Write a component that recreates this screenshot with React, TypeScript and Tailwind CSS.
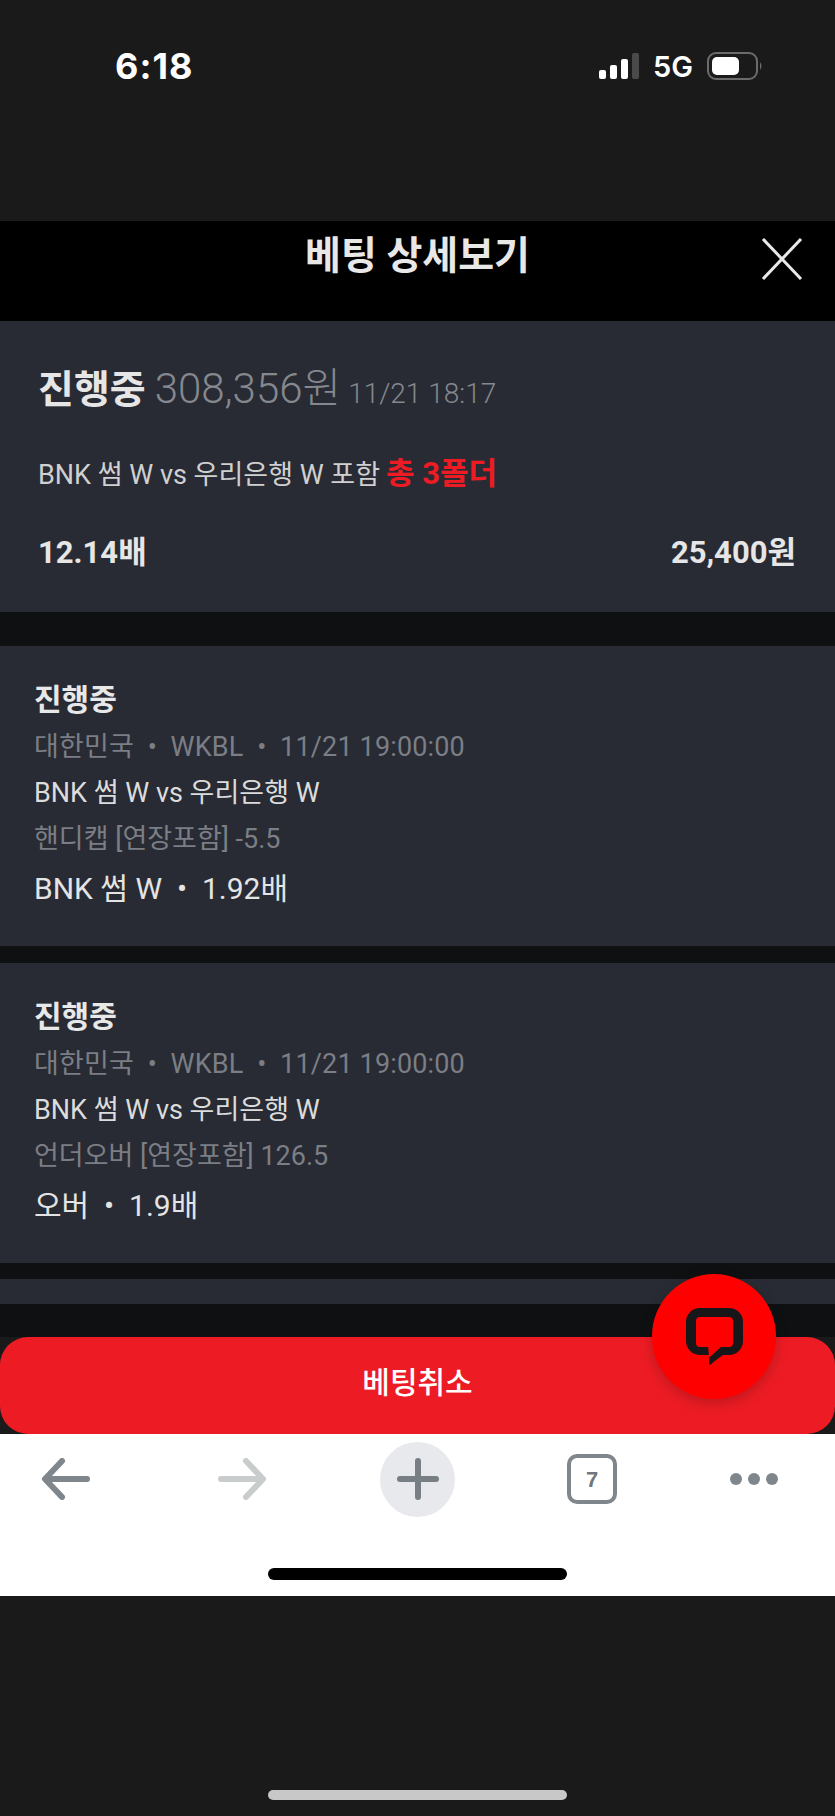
const kr = "font-['Roboto','Noto_Sans_CJK_KR',sans-serif]";

const legs = [
  { market: '핸디캡 [연장포함] -5.5', pick: 'BNK 썸 W  •  1.92배' },
  { market: '언더오버 [연장포함] 126.5', pick: '오버  •  1.9배' },
];

function StatusBar() {
  return (
    <div className="h-[221px] shrink-0 bg-[#1a1a1a] pl-[115px] pr-[72px] pt-[46px]">
      <div className="flex h-[40px] items-center justify-between">
        <span className="font-['Inter',sans-serif] text-[36px] font-bold tracking-[1px] text-white">6:18</span>
        <div className="flex items-center">
          <svg width="40" height="26" viewBox="0 0 40 26" className="mr-[14px]">
            <rect x="0" y="17" width="7" height="9" rx="2" fill="#fff" />
            <rect x="11" y="12" width="7" height="14" rx="2" fill="#fff" />
            <rect x="22" y="6" width="7" height="20" rx="2" fill="#fff" />
            <rect x="33" y="0" width="7" height="26" rx="2" fill="#4a4a4a" />
          </svg>
          <span className="mr-[14px] font-['Inter',sans-serif] text-[29px] font-semibold leading-none text-white">5G</span>
          <svg width="56" height="28" viewBox="0 0 56 28">
            <rect x="1" y="1" width="49" height="26" rx="8" fill="none" stroke="#6b6b6b" strokeWidth="2" />
            <rect x="5" y="5" width="27" height="18" rx="5" fill="#fff" />
            <path d="M53 10 Q56 14 53 18 Z" fill="#6b6b6b" />
          </svg>
        </div>
      </div>
    </div>
  );
}

function LegCard({ market, pick }: { market: string; pick: string }) {
  return (
    <div className="flex h-[300px] shrink-0 flex-col bg-[#282b33] pl-[34px] pt-[36px]">
      <p className="h-[36px] text-[30px] leading-[36px] font-bold text-[#e8e8e8]">진행중</p>
      <p className="mt-[11px] h-[36px] text-[27px] leading-[36px] tracking-[0.15px] whitespace-pre text-[#7b7e85]">대한민국  •  WKBL  •  11/21 19:00:00</p>
      <p className="mt-[10px] h-[36px] text-[27px] leading-[36px] text-[#dcdcdc]">BNK 썸 W vs 우리은행 W</p>
      <p className="mt-[10px] h-[36px] text-[27px] leading-[36px] text-[#7b7e85]">{market}</p>
      <p className="mt-[12px] h-[40px] text-[30px] leading-[40px] whitespace-pre text-[#e4e4e4]">{pick}</p>
    </div>
  );
}

function Toolbar() {
  return (
    <div className="relative h-[162px] shrink-0 bg-white">
      <div className="flex h-[90px] items-center pl-[41px]">
        <svg width="50" height="42" viewBox="0 0 50 42" fill="none" stroke="#80878c" strokeWidth="6" strokeLinecap="round" strokeLinejoin="round">
          <path d="M46 21H5M21 3 4 21l17 18" />
        </svg>
        <svg width="50" height="42" viewBox="0 0 50 42" className="ml-[126px]" fill="none" stroke="#c9cccd" strokeWidth="6" strokeLinecap="round" strokeLinejoin="round">
          <path d="M4 21h41M29 3l17 18-17 18" />
        </svg>
        <div className="ml-[113px] flex h-[75px] w-[75px] items-center justify-center rounded-full bg-[#e8e9ec]">
          <svg width="42" height="42" viewBox="0 0 42 42" fill="none" stroke="#777e84" strokeWidth="6" strokeLinecap="round">
            <path d="M21 3v36M3 21h36" />
          </svg>
        </div>
        <div className="ml-[112px] flex h-[50px] w-[50px] items-center justify-center rounded-[10px] border-[4px] border-[#80878c] font-['Liberation_Sans',sans-serif] text-[22px] font-bold text-[#70767b]">7</div>
        <svg width="48" height="14" viewBox="0 0 48 14" className="ml-[113px]" fill="#80878c">
          <circle cx="6" cy="7" r="6" />
          <circle cx="24" cy="7" r="6" />
          <circle cx="42" cy="7" r="6" />
        </svg>
      </div>
      <div className="absolute bottom-[16px] left-[268px] h-[12px] w-[299px] rounded-full bg-black" />
    </div>
  );
}

export default function App() {
  return (
    <div className={`relative flex h-[1816px] w-[835px] flex-col overflow-hidden bg-[#1a1a1a] ${kr}`}>
      <StatusBar />

      <div className="relative flex h-[100px] shrink-0 justify-center bg-black pt-[10px]">
        <h1 className="text-[39px] leading-[50px] font-bold text-[#e8e8e8]">베팅 상세보기</h1>
        <svg width="42" height="42" viewBox="0 0 42 42" className="absolute top-[17px] right-[32px]" fill="none" stroke="#e8e8e8" strokeWidth="3">
          <path d="M2 1l38 40M40 1 2 41" />
        </svg>
      </div>

      <div className="flex h-[291px] shrink-0 flex-col bg-[#282b33] pl-[38px] pr-[39px] pt-[36px]">
        <div className="flex h-[48px] items-baseline">
          <span className="text-[39px] font-bold text-[#e6e6e6]">진행중</span>
          <span className="ml-[9px] text-[42px] font-light text-[#85888f]">308,356원</span>
          <span className="ml-[7px] text-[28px] font-light text-[#85888f]">11/21 18:17</span>
        </div>
        <div className="mt-[46px] flex h-[40px] items-baseline">
          <span className="text-[27px] text-[#d0d0d0]">BNK 썸 W vs 우리은행 W 포함</span>
          <span className="ml-[6px] text-[31px] font-bold text-[#ed1c24]">총 3폴더</span>
        </div>
        <div className="mt-[39px] flex items-center justify-between text-[31px] font-bold text-[#e6e6e6]">
          <span>12.14배</span>
          <span>25,400원</span>
        </div>
      </div>

      <div className="h-[34px] shrink-0 bg-[#0f1012]" />
      <LegCard {...legs[0]} />
      <div className="h-[17px] shrink-0 bg-[#0f1012]" />
      <LegCard {...legs[1]} />
      <div className="h-[16px] shrink-0 bg-[#0f1012]" />
      <div className="h-[25px] shrink-0 bg-[#282b33]" />
      <div className="h-[33px] shrink-0 bg-[#0f1012]" />

      <button className="flex h-[97px] shrink-0 items-center justify-center rounded-[28px] bg-[#ed1c24] pb-[6px] text-[30px] font-medium text-white">
        베팅취소
      </button>

      <Toolbar />

      <div className="absolute bottom-[16px] left-[268px] h-[10px] w-[299px] rounded-full bg-[#c8c8c8]" />

      <div className="absolute top-[1274px] left-[652px] flex h-[125px] w-[124px] items-center justify-center rounded-full bg-[#ff0000] shadow-[0_4px_14px_rgba(0,0,0,0.2)]">
        <svg width="57" height="57" viewBox="0 0 57 57">
          <rect x="0" y="0" width="57" height="47" rx="14" fill="#17171a" />
          <path d="M23 44v13l14-10Z" fill="#17171a" />
          <rect x="10" y="9" width="37" height="30" rx="4" fill="#ff0000" />
          <path d="M22 37l1 12 1 0 13-12Z" fill="#ff0000" />
          <path d="M24 50.5v6.5l11-9.5Z" fill="#17171a" />
        </svg>
      </div>
    </div>
  );
}
